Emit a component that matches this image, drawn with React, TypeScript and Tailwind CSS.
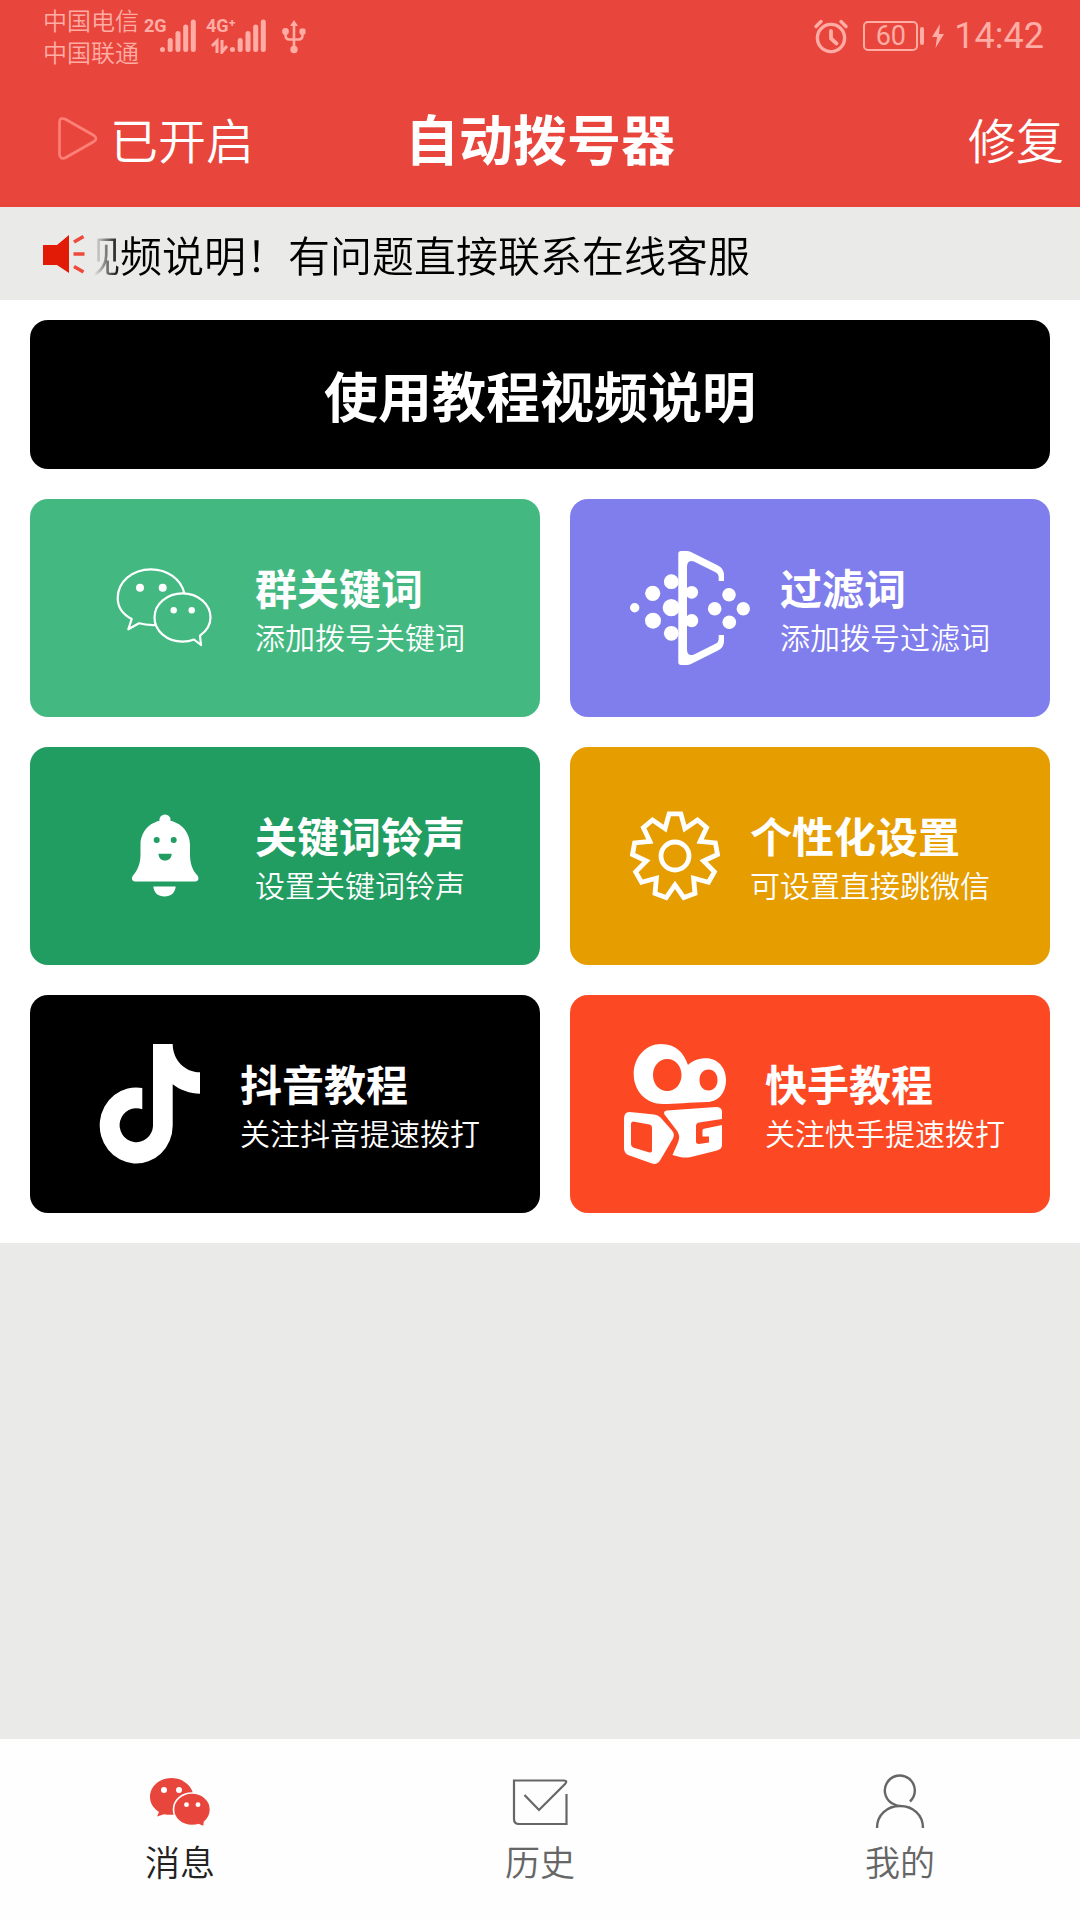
import type { ReactNode } from "react";

const gearPoints = Array.from({ length: 9 }, (_, i) => {
  const at = (deg: number, r: number) => {
    const a = (deg * Math.PI) / 180;
    return `${(45 + r * Math.sin(a)).toFixed(1)},${(45 - r * Math.cos(a)).toFixed(1)}`;
  };
  const base = i * 40;
  return [at(base - 8, 42.5), at(base + 8, 42.5), at(base + 20, 29)].join(" ");
}).join(" ");

function SignalBars() {
  return (
    <svg className="h-9 w-9" viewBox="0 0 36 36" stroke="#ffaca5" strokeWidth="5" strokeLinecap="round" aria-hidden="true">
      <path d="M2.500 31.600v-.2M10.200 31.600v-9M18 31.600v-16M25.700 31.600v-22.500M33.300 31.600v-27.500" />
    </svg>
  );
}

function UsbIcon() {
  return (
    <svg className="h-9 w-6" viewBox="0 0 24 36" fill="none" stroke="#ffaca5" strokeWidth="2.600" aria-hidden="true">
      <path d="M12 5v26M3.500 14v3q0 4.500 4 4.500h9q4 0 4-4.500v-3" />
      <path d="M12 2l4 6H8z" fill="#ffaca5" stroke="none" />
      <circle cx="3.500" cy="13.500" r="3.400" fill="#ffaca5" stroke="none" />
      <rect x="17.500" y="10.500" width="6" height="6" rx="1.500" fill="#ffaca5" stroke="none" />
      <circle cx="12" cy="31.500" r="3.700" fill="#ffaca5" stroke="none" />
    </svg>
  );
}

function AlarmIcon() {
  return (
    <svg className="h-9 w-9" viewBox="0 0 36 36" fill="none" stroke="#ffaca5" strokeLinecap="round" aria-hidden="true">
      <circle cx="18" cy="20" r="13.600" strokeWidth="3.400" />
      <path d="M18 13v7.500l5.500 5" strokeWidth="3.800" strokeLinejoin="round" />
      <path d="M3 8.500l5-5M33 8.500l-5-5" strokeWidth="3.400" />
    </svg>
  );
}

function PlayIcon() {
  return (
    <svg className="h-11 w-11" viewBox="0 0 44 44" fill="none" stroke="#ff8078" strokeWidth="2.600" strokeLinejoin="round" aria-hidden="true">
      <path d="M3.500 6Q3.500 1 9 3L38 19.500Q42 22.500 38 25.500L9 42Q4 43.500 3.500 38.500Z" />
    </svg>
  );
}

function SpeakerIcon() {
  return (
    <svg className="h-10 w-11 shrink-0" viewBox="0 0 44 40" aria-hidden="true">
      <path d="M1 11h14L27 1v38L15 31H1z" fill="#e11b05" />
      <path d="M32 8L41.500 2.500M31.500 20H42.500M32 32.500L41.500 38" stroke="#ee4a3c" strokeWidth="3.600" />
    </svg>
  );
}

function ChatIcon() {
  return (
    <svg className="h-30 w-30 shrink-0" viewBox="0 0 120 120" fill="none" stroke="#fff" strokeWidth="2.200" strokeLinejoin="round" aria-hidden="true">
      <path d="M79.300 45.300C76 31 62 21.300 46 21.300C27 21.300 12.700 34 12.700 50C12.700 59 18 66.500 26.700 71L23.300 81.300L34 75.300C40 77 45 77.300 51 77" />
      <path d="M95 87.700C101.500 83 105.500 77 105.500 69.500C105.500 56 93 45.300 77.500 45.300C62 45.300 49.500 56 49.500 69.500C49.500 83 62 93.700 77.500 93.700C82 93.700 86 92.800 89 91.500L96 97Z" />
      <g fill="#fff" stroke="none">
        <circle cx="35" cy="39.700" r="4" />
        <circle cx="57.700" cy="39.700" r="4" />
        <circle cx="68.700" cy="62.300" r="3.200" />
        <circle cx="86.700" cy="62.300" r="3.200" />
      </g>
    </svg>
  );
}

function FilterIcon() {
  return (
    <svg className="h-30 w-30 shrink-0" viewBox="0 0 120 120" fill="#fff" aria-hidden="true">
      <path d="M51 3H57Q59 3 61 4L88 17.500Q94 20.500 94 27V33H88.700V29Q88.700 26 86 24.500L64 13.500Q57 11 57 19V101Q57 109 64 106.500L86 95.500Q88.700 94 88.700 91V87H94V93Q94 99.500 88 102.500L61 116Q59 117 57 117H51Q48.300 117 48.300 114V6Q48.300 3 51 3Z" />
      <circle cx="4.700" cy="59.700" r="4.700" />
      <circle cx="22.700" cy="45.300" r="7.600" />
      <circle cx="23" cy="72.700" r="8" />
      <circle cx="41.300" cy="33.700" r="7.400" />
      <circle cx="41.300" cy="59.700" r="8.600" />
      <circle cx="41.300" cy="85.300" r="7.400" />
      <circle cx="61.700" cy="44.300" r="6.400" />
      <circle cx="61.700" cy="72.700" r="6.600" />
      <circle cx="84.700" cy="60.700" r="6.800" />
      <circle cx="99" cy="46.700" r="6.800" />
      <circle cx="99.300" cy="74.300" r="6.800" />
      <circle cx="113.300" cy="60.700" r="6.700" />
    </svg>
  );
}

function BellIcon() {
  return (
    <svg className="h-30 w-30 shrink-0" viewBox="0 11 120 120" fill="#fff" aria-hidden="true">
      <circle cx="60" cy="35" r="5.600" />
      <path d="M60 35.300C46 35.300 35.500 46 35.500 60V70C35.500 79 32 86 28 90.500C26 93 27 96.400 30 96.400H90.500C93.500 96.400 94.300 93 92.500 90.500C88 86 85 79 85 70V60C85 46 74 35.300 60 35.300Z" />
      <path d="M48.300 101.500H70.700C70 108 66 111.500 59.500 111.500C53 111.500 49 108 48.300 101.500Z" />
      <g fill="#229d61">
        <circle cx="51.700" cy="55" r="3" />
        <circle cx="68.700" cy="55" r="3" />
        <path d="M53.500 68.700H66.700C66.500 73 64 75.500 60 75.500C56 75.500 53.700 73 53.500 68.700Z" />
      </g>
    </svg>
  );
}

function GearIcon() {
  return (
    <svg className="size-[90px] shrink-0" viewBox="0 0 90 90" fill="none" stroke="#fff" strokeWidth="4.800" aria-hidden="true">
      <polygon points={gearPoints} />
      <circle cx="45" cy="45" r="14" />
    </svg>
  );
}

function DouyinIcon() {
  return (
    <svg className="h-30 w-30 shrink-0" viewBox="0 0 120 120" fill="#fff" aria-hidden="true">
      <path d="M63 0H82.700C82.700 16 95 28.300 110 28.300V49.700C100 49.700 90 46 82.700 40.300V82A36.500 38 0 1 1 52.300 44V65.300A16.700 17 0 1 0 63 82Z" />
    </svg>
  );
}

function KuaishouIcon() {
  return (
    <svg className="h-30 w-30 shrink-0" viewBox="0 0 120 120" fill="#fff" fillRule="evenodd" aria-hidden="true">
      <path d="M46 0C61 0 69 9 73 21C77 17 84 14.300 91 14.300C103 14.300 111 24 111 36C111 49 103 58 92 58C75 58.500 60 60 48 60C31 60 18.700 47 18.700 30C18.700 13 31 0 46 0ZM52.300 15C44 15 38 22 38 31C38 40 44 47 52.300 47C60.600 47 66.500 40 66.500 31C66.500 22 60.600 15 52.300 15ZM93.500 25.500C88 25.500 84.500 30 84.500 36C84.500 42 88 46.500 93.500 46.500C99 46.500 102.500 42 102.500 36C102.500 30 99 25.500 93.500 25.500Z" />
      <path d="M15 68L39 70.500Q43 71 45.500 73.500L57 86.500Q60 90 58 94.500L45 116.500Q42 121 37 119.500L13 111Q9 109 9 104V74Q9.500 67.500 15 68ZM18 77.500Q16 77.500 16 80V100Q16 102.500 18 103.500L34.500 108.500Q37 109 37 106.500V83.500Q37 81 34.500 80.500Z" />
      <path d="M52 66.500L101 63Q107 63 107 68V75L84 78.500Q81 79 81 82V97.500Q81 100 84 100L94 98.500V92.500H87.500V86.500Q87.500 85 89 84.700L107 81V101Q107 105 102 106.500L76 113Q70 114 65 113L57.500 111L63 98.500Q66 91 61 85.500L49.500 70.500Q48 67 52 66.500Z" />
    </svg>
  );
}

function ChatTabIcon() {
  return (
    <svg className="h-15 w-15" viewBox="0 0 60 60" fill="#e8463c" aria-hidden="true">
      <path d="M21.500 5C9.500 5 0 13.500 0 24C0 30 3.500 35.500 9 39L7 43.500L14 41.300C18 42 22 42 25 41.500L43 20C40 11 31.500 5 21.500 5Z" />
      <path d="M42 20C52.500 20 60.500 27.300 60.500 36.500C60.500 41.500 58 46 54.500 49L54 54L48.500 51.700C46.500 52.300 44.500 52.500 42 52.500C31.500 52.500 23.500 45.500 23.500 36.500C23.500 27.500 31.500 20 42 20Z" stroke="#fff" strokeWidth="1.600" />
      <g fill="#fff">
        <circle cx="14" cy="17" r="3" />
        <circle cx="29" cy="17" r="3" />
        <circle cx="36.500" cy="31.700" r="2.400" />
        <circle cx="48" cy="31.700" r="2.400" />
      </g>
    </svg>
  );
}

function HistoryTabIcon() {
  return (
    <svg className="h-15 w-15" viewBox="0 0 60 60" fill="none" stroke="#666" strokeWidth="2.200" aria-hidden="true">
      <path d="M56.500 21V51H9Q4 51 4 46V7.500H54Q58 7.500 55 11L29 37L14.500 22" />
    </svg>
  );
}

function UserTabIcon() {
  return (
    <svg className="h-15 w-15" viewBox="0 0 60 60" fill="none" stroke="#666" strokeWidth="2.400" aria-hidden="true">
      <path d="M40 28.500A15 15 0 1 0 24.500 31.500Q27 33 30 33C43 33 53 42 53 55M7 55C7 42 17 33 30 33" />
    </svg>
  );
}

function Card({ title, note, color, icon }: { title: string; note: string; color: string; icon: ReactNode }) {
  return (
    <button type="button" className={`flex h-[218px] items-center justify-center gap-[30px] rounded-[18px] text-left text-white ${color}`}>
      {icon}
      <span className="flex flex-col pb-1">
        <span className="text-[42px] leading-[60px] font-bold whitespace-nowrap">{title}</span>
        <span className="text-[30px] leading-[38px] font-[350] whitespace-nowrap">{note}</span>
      </span>
    </button>
  );
}

function Tab({ label, icon, active }: { label: string; icon: ReactNode; active?: boolean }) {
  return (
    <a href="#" aria-current={active ? "page" : undefined} className={`flex flex-1 flex-col items-center gap-2 pt-[34px] pb-[39px] text-[35px] leading-[40px] font-[350] ${active ? "text-[#222]" : "text-[#666]"}`}>
      {icon}
      <span>{label}</span>
    </a>
  );
}

export default function App() {
  return (
    <div className="flex min-h-screen flex-col bg-[#eaeae9] font-['Noto_Sans_CJK_SC',sans-serif]">
      <header className="bg-[#e8463c] text-white">
        <div className="flex h-[72px] items-center justify-between pr-9 pl-[43px] text-[#ffaca5]">
          <div className="flex items-center">
            <div className="text-[24px] leading-[32px] font-[350]">
              <div>中国电信</div>
              <div>中国联通</div>
            </div>
            <div className="relative ml-[21px]">
              <span className="absolute -left-4 -top-1 font-['Roboto',sans-serif] text-[18px] leading-[24px] font-bold">2G</span>
              <SignalBars />
            </div>
            <div className="relative ml-[34px]">
              <span className="absolute -left-6 -top-1 font-['Roboto',sans-serif] text-[18px] leading-[24px] font-bold">4G⁺</span>
              <svg className="absolute -left-5 top-5 h-4 w-5" viewBox="0 0 20 16" fill="none" stroke="#ffaca5" strokeWidth="3" aria-hidden="true">
                <path d="M7 15V3L2 8M12 2v12l5-6" />
              </svg>
              <SignalBars />
            </div>
            <div className="ml-4">
              <UsbIcon />
            </div>
          </div>
          <div className="flex items-center font-['Roboto',sans-serif]">
            <AlarmIcon />
            <div className="ml-[14px] flex h-[30px] w-[55px] items-center justify-center rounded-[5px] border-2 border-[#ffaca5] text-[27px] leading-[28px]">60</div>
            <div className="ml-0.5 h-[18px] w-1 rounded-sm bg-[#ffaca5]" />
            <svg className="ml-2 h-6 w-3" viewBox="0 0 12 24" fill="#ffaca5" aria-hidden="true">
              <path d="M8 0L0 13h5L3.500 24L12 10H7z" />
            </svg>
            <span className="ml-2.5 text-[36px] leading-[40px]">14:42</span>
          </div>
        </div>
        <div className="grid h-[135px] grid-cols-[minmax(0,1fr)_auto_minmax(0,1fr)] items-center pb-1">
          <button type="button" className="ml-14 flex items-center gap-2.5 justify-self-start text-[48px] leading-[64px] font-[350]">
            <PlayIcon />
            已开启
          </button>
          <h1 className="text-[54px] leading-[64px] font-bold">自动拨号器</h1>
          <button type="button" className="mr-4 justify-self-end text-[48px] leading-[64px] font-[350]">修复</button>
        </div>
      </header>

      <div className="flex h-[93px] items-center gap-2 pr-[30px] pl-[42px]">
        <SpeakerIcon />
        <div className="min-w-0 flex-1 overflow-hidden [mask-image:linear-gradient(to_right,transparent,black_26px)]">
          <p className="-ml-4 text-[42px] leading-[60px] font-[350] whitespace-nowrap text-black">视频说明！有问题直接联系在线客服</p>
        </div>
      </div>

      <main className="flex flex-col gap-[30px] bg-white px-[30px] pt-5 pb-[30px]">
        <button type="button" className="h-[149px] rounded-[18px] bg-black text-[54px] leading-[64px] font-bold text-white">使用教程视频说明</button>
        <div className="grid grid-cols-[17fr_16fr] gap-[30px]">
          <Card title="群关键词" note="添加拨号关键词" color="bg-[#43b981]" icon={<ChatIcon />} />
          <Card title="过滤词" note="添加拨号过滤词" color="bg-[#7f7eec]" icon={<FilterIcon />} />
          <Card title="关键词铃声" note="设置关键词铃声" color="bg-[#229d61]" icon={<BellIcon />} />
          <Card title="个性化设置" note="可设置直接跳微信" color="bg-[#e59d00]" icon={<GearIcon />} />
          <Card title="抖音教程" note="关注抖音提速拨打" color="bg-black" icon={<DouyinIcon />} />
          <Card title="快手教程" note="关注快手提速拨打" color="bg-[#fc4924]" icon={<KuaishouIcon />} />
        </div>
      </main>

      <nav className="mt-auto flex bg-[#fdfefd]">
        <Tab label="消息" icon={<ChatTabIcon />} active />
        <Tab label="历史" icon={<HistoryTabIcon />} />
        <Tab label="我的" icon={<UserTabIcon />} />
      </nav>
    </div>
  );
}
